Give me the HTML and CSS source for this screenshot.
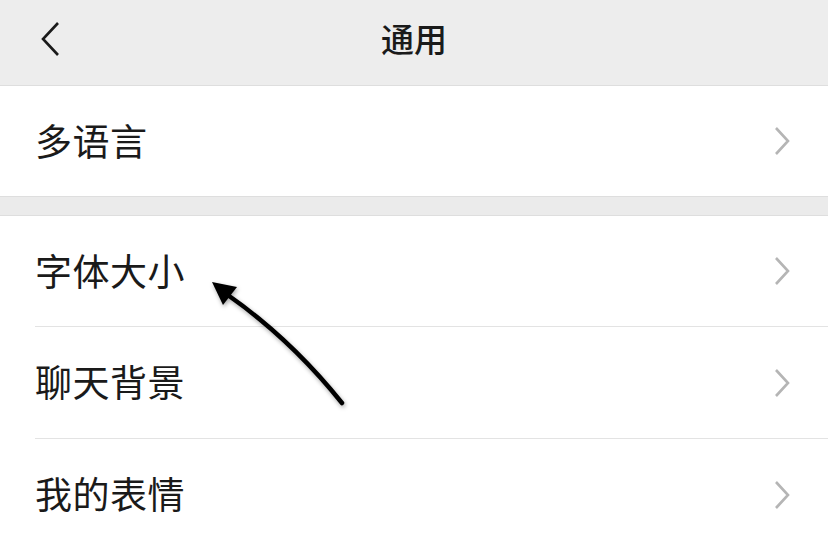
FILE: index.html
```html
<!DOCTYPE html>
<html lang="zh-CN">
<head>
  <meta charset="UTF-8">
  <meta name="viewport" content="width=device-width, initial-scale=1.0">
  <title>通用</title>
  <link rel="stylesheet" href="styles.css">
</head>
<body>
  <header class="nav-bar">
    <button class="back" aria-label="返回">
      <svg width="20" height="36" viewBox="0 0 20 36"><polyline points="18,2 3,18 18,34" fill="none" stroke="#1a1a1a" stroke-width="2.6"/></svg>
    </button>
    <h1 class="nav-title">通用</h1>
  </header>

  <main>
    <section class="group">
      <div class="cell"><div class="cell-body"><span class="cell-label">多语言</span><span class="chevron"></span></div></div>
    </section>

    <section class="group">
      <div class="cell"><div class="cell-body"><span class="cell-label">字体大小</span><span class="chevron"></span></div></div>
      <div class="cell"><div class="cell-body"><span class="cell-label">聊天背景</span><span class="chevron"></span></div></div>
      <div class="cell"><div class="cell-body"><span class="cell-label">我的表情</span><span class="chevron"></span></div></div>
    </section>
  </main>

  <svg class="pointer" width="828" height="546" viewBox="0 0 828 546" aria-hidden="true">
    <path d="M342 403 Q 290 338 225 293" fill="none" stroke="#000" stroke-width="4.5" stroke-linecap="round"/>
    <polygon points="212,282 237,287 223,305" fill="#000"/>
  </svg>
</body>
</html>
```

FILE: styles.css
```css
body {
  margin: 0;
  background: #ebebeb;
  font-family: "Noto Sans CJK SC", "Noto Sans", sans-serif;
  color: #1a1a1a;
  overflow: hidden;
}
.nav-bar {
  height: 85px;
  background: #ededed;
  border-bottom: 1px solid #dedede;
  display: flex;
  align-items: center;
  justify-content: center;
  position: relative;
}
.back {
  position: absolute;
  left: 40px;
  top: 21px;
  padding: 0;
  border: none;
  background: none;
  line-height: 0;
}
.nav-title {
  margin: 0;
  font-size: 33px;
  font-weight: 500;
  margin-top: -10px;
}
.group {
  background: #fff;
  border-bottom: 1px solid #dedede;
}
.group + .group {
  margin-top: 18px;
  border-top: 1px solid #dedede;
}
.cell {
  padding-left: 35px;
}
.cell + .cell .cell-body {
  border-top: 1px solid #e3e3e3;
}
.cell-body {
  height: 110px;
  display: flex;
  align-items: center;
  justify-content: space-between;
  padding-right: 38px;
}
.cell + .cell .cell-body {
  height: 111px;
}
.cell-label {
  font-size: 37px;
  letter-spacing: 0.5px;
  margin-top: -3px;
}
.chevron {
  width: 16px;
  height: 30px;
  background: no-repeat center url("data:image/svg+xml,%3Csvg xmlns='http://www.w3.org/2000/svg' width='16' height='30' viewBox='0 0 16 30'%3E%3Cpolyline points='2,2 14,15 2,28' fill='none' stroke='%23b5b5b5' stroke-width='2.6'/%3E%3C/svg%3E");
}
.pointer {
  position: absolute;
  left: 0;
  top: 0;
  pointer-events: none;
  filter: drop-shadow(1px 2px 2px rgba(0, 0, 0, 0.35));
}
```
